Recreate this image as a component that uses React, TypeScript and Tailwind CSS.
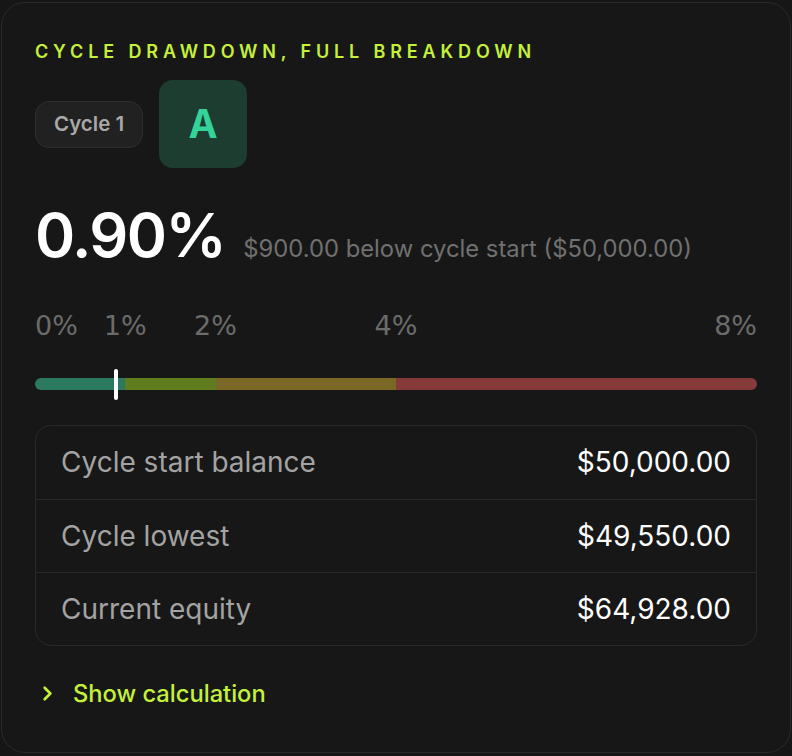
import { ChevronRight } from "lucide-react";

const ticks = [
  { label: "0%", pct: 0, align: "left" },
  { label: "1%", pct: 1, align: "center" },
  { label: "2%", pct: 2, align: "center" },
  { label: "4%", pct: 4, align: "center" },
  { label: "8%", pct: 8, align: "right" },
];

const segments = [
  { from: 0, to: 1, color: "bg-[#2b7a5f]" },
  { from: 1, to: 2, color: "bg-[#5f7d1f]" },
  { from: 2, to: 4, color: "bg-[#7a6826]" },
  { from: 4, to: 8, color: "bg-[#873a3a]" },
];

const rows = [
  { label: "Cycle start balance", value: "$50,000.00" },
  { label: "Cycle lowest", value: "$49,550.00" },
  { label: "Current equity", value: "$64,928.00" },
];

const MAX = 8;
const current = 0.9;

export default function App() {
  return (
    <div className="min-h-screen bg-[#161616] pt-[2px] pl-[1px] font-['Inter',sans-serif]">
      <div className="w-[790px] h-[751px] rounded-[24px] border border-[#2a2a2a] bg-[#171717] px-[33px] pt-[37px] flex flex-col">
        {/* Header */}
        <h2 className="text-[18px] leading-[24px] font-semibold tracking-[0.27em] text-[#c4f13a] uppercase">
          Cycle drawdown, full breakdown
        </h2>

        <div className="mt-[16px] flex items-center gap-4">
          <span className="h-[47px] px-[18px] flex items-center rounded-[14px] border border-[#2e2e2e] bg-[#212121] text-[20.5px] font-semibold text-[#a8a8a8]">
            Cycle 1
          </span>
          <div className="w-[88px] h-[88px] rounded-[14px] bg-[#1c3d30] flex items-center justify-center text-[39px] font-bold text-[#34d399]">
            A
          </div>
        </div>

        {/* Headline figure */}
        <div className="mt-[36px] flex items-baseline gap-[18px]">
          <span className="text-[61px] leading-[62px] font-semibold text-white tracking-tight">0.90%</span>
          <span className="text-[23.8px] text-[#707070]">$900.00 below cycle start ($50,000.00)</span>
        </div>

        {/* Scale */}
        <div className="mt-[46px] relative h-[26px] text-[27px] leading-[26px] text-[#6b6b6b] font-['DejaVu_Sans',sans-serif]">
          {ticks.map((t) => (
            <span
              key={t.label}
              className={
                t.align === "left"
                  ? "absolute top-0 left-0"
                  : t.align === "right"
                  ? "absolute top-0 right-0"
                  : "absolute top-0 -translate-x-1/2"
              }
              style={t.align === "center" ? { left: `${(t.pct / MAX) * 100}%` } : undefined}
            >
              {t.label}
            </span>
          ))}
        </div>

        <div className="mt-[30px] relative h-[31px] flex items-center">
          <div className="w-full h-[12px] rounded-full overflow-hidden flex">
            {segments.map((s) => (
              <div
                key={s.from}
                className={`h-full ${s.color}`}
                style={{ width: `${((s.to - s.from) / MAX) * 100}%` }}
              />
            ))}
          </div>
          <div
            className="absolute top-0 h-[31px] w-[4px] -translate-x-1/2 rounded-full bg-white"
            style={{ left: `${(current / MAX) * 100}%` }}
          />
        </div>

        {/* Breakdown table */}
        <div className="mt-[25px] rounded-[16px] border border-[#292929] overflow-hidden">
          {rows.map((r, i) => (
            <div
              key={r.label}
              className={`h-[73px] px-[25px] flex items-center justify-between text-[28px] ${
                i > 0 ? "border-t border-[#272727]" : ""
              }`}
            >
              <span className="text-[#a3a3a3]">{r.label}</span>
              <span className="text-white">{r.value}</span>
            </div>
          ))}
        </div>

        <button className="mt-[33px] flex items-center gap-[14px] pl-[1px] text-[23.7px] leading-[30px] font-medium text-[#c4f13a]">
          <ChevronRight className="w-[23px] h-[23px]" strokeWidth={2.75} />
          Show calculation
        </button>
      </div>
    </div>
  );
}
